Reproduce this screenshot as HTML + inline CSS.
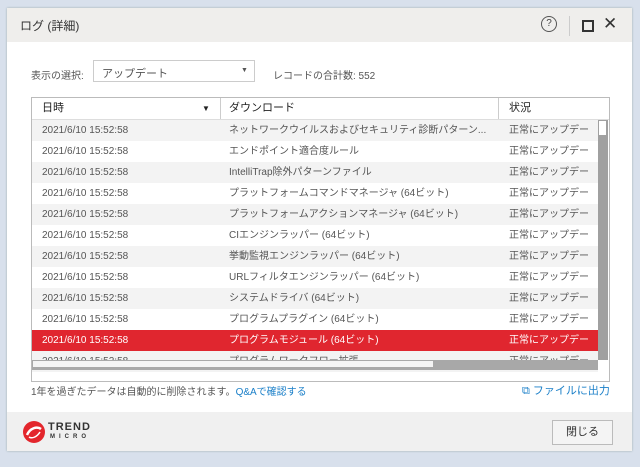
<!DOCTYPE html>
<html><head><meta charset="utf-8"><style>
body{margin:0;width:640px;height:467px;background:#d8e0ec;font-family:"Liberation Sans","Noto Sans CJK JP",sans-serif;position:relative;overflow:hidden;font-size:10px;color:#333}
.win{position:absolute;left:7px;top:8px;width:625px;height:443px;background:#fff;box-shadow:0 0 2px #9aa;}
.title{position:absolute;left:0;top:0;width:625px;height:34px;background:#efeeec;}
.abs{position:absolute;white-space:nowrap}
.tbl{position:absolute;left:24px;top:89px;width:577px;height:283px;border:1px solid #bbb;background:#fff;overflow:hidden}
.row{position:absolute;left:0;width:566px;height:21px;line-height:21px;color:#555;overflow:hidden;font-size:10px}
.row span{position:absolute}
.footer{position:absolute;left:0;top:404px;width:625px;height:39px;background:#f0f0f0}
</style></head><body>
<div class="win">
<div class="title">
<div class="abs" style="left:13px;top:9px;font-size:12px;color:#333">ログ (詳細)</div>
<div class="abs" style="left:534px;top:8px;width:14px;height:14px;border:1px solid #555;border-radius:50%;font-size:10px;text-align:center;line-height:14px;color:#444">?</div>
<div class="abs" style="left:562px;top:8px;width:1px;height:20px;background:#ccc"></div>
<div class="abs" style="left:575px;top:12px;width:8px;height:8px;border:2px solid #333"></div>
<div class="abs" style="left:596px;top:6px;font-size:17px;color:#333">✕</div>
</div>
<div class="abs" style="left:24px;top:59px;font-size:10px;color:#555">表示の選択:</div>
<div class="abs" style="left:86px;top:52px;width:162px;height:22px;border:1px solid #ccc;box-sizing:border-box"><span class="abs" style="left:8px;top:4px;font-size:11px;color:#555">アップデート</span><span class="abs" style="left:147px;top:6px;font-size:7px;color:#555">▼</span></div>
<div class="abs" style="left:266px;top:59px;color:#555">レコードの合計数: 552</div>
<div class="tbl">
<div class="abs" style="left:0;top:0;width:577px;height:21px;border-bottom:1px solid #ddd;font-size:11px;color:#222;line-height:21px">
<span class="abs" style="left:10px">日時</span><span class="abs" style="left:170px;font-size:8px">▼</span>
<span class="abs" style="left:188px;top:0;width:1px;height:21px;background:#ccc"></span>
<span class="abs" style="left:197px">ダウンロード</span>
<span class="abs" style="left:466px;top:0;width:1px;height:21px;background:#ccc"></span>
<span class="abs" style="left:477px">状況</span></div>
<div class="row" style="top:22px;background:#f3f3f3"><span style="left:10px">2021/6/10 15:52:58</span><span style="left:197px">ネットワークウイルスおよびセキュリティ診断パターン...</span><span style="left:477px">正常にアップデート</span></div>
<div class="row" style="top:43px"><span style="left:10px">2021/6/10 15:52:58</span><span style="left:197px">エンドポイント適合度ルール</span><span style="left:477px">正常にアップデート</span></div>
<div class="row" style="top:64px;background:#f3f3f3"><span style="left:10px">2021/6/10 15:52:58</span><span style="left:197px">IntelliTrap除外パターンファイル</span><span style="left:477px">正常にアップデート</span></div>
<div class="row" style="top:85px"><span style="left:10px">2021/6/10 15:52:58</span><span style="left:197px">プラットフォームコマンドマネージャ (64ビット)</span><span style="left:477px">正常にアップデート</span></div>
<div class="row" style="top:106px;background:#f3f3f3"><span style="left:10px">2021/6/10 15:52:58</span><span style="left:197px">プラットフォームアクションマネージャ (64ビット)</span><span style="left:477px">正常にアップデート</span></div>
<div class="row" style="top:127px"><span style="left:10px">2021/6/10 15:52:58</span><span style="left:197px">CIエンジンラッパー (64ビット)</span><span style="left:477px">正常にアップデート</span></div>
<div class="row" style="top:148px;background:#f3f3f3"><span style="left:10px">2021/6/10 15:52:58</span><span style="left:197px">挙動監視エンジンラッパー (64ビット)</span><span style="left:477px">正常にアップデート</span></div>
<div class="row" style="top:169px"><span style="left:10px">2021/6/10 15:52:58</span><span style="left:197px">URLフィルタエンジンラッパー (64ビット)</span><span style="left:477px">正常にアップデート</span></div>
<div class="row" style="top:190px;background:#f3f3f3"><span style="left:10px">2021/6/10 15:52:58</span><span style="left:197px">システムドライバ (64ビット)</span><span style="left:477px">正常にアップデート</span></div>
<div class="row" style="top:211px"><span style="left:10px">2021/6/10 15:52:58</span><span style="left:197px">プログラムプラグイン (64ビット)</span><span style="left:477px">正常にアップデート</span></div>
<div class="row" style="top:232px;background:#e0262f;color:#fff"><span style="left:10px">2021/6/10 15:52:58</span><span style="left:197px">プログラムモジュール (64ビット)</span><span style="left:477px">正常にアップデート</span></div>
<div class="row" style="top:253px;background:#f3f3f3"><span style="left:10px">2021/6/10 15:52:58</span><span style="left:197px">プログラムワークフロー拡張</span><span style="left:477px">正常にアップデート</span></div>
<div class="abs" style="left:566px;top:22px;width:10px;height:240px;background:#a0a0a0"></div>
<div class="abs" style="left:567px;top:23px;width:7px;height:14px;background:#fff"></div>
<div class="abs" style="left:0;top:262px;width:566px;height:10px;background:#a8a8a8"></div>
<div class="abs" style="left:1px;top:263px;width:400px;height:6px;background:#f4f4f4"></div>
<div class="abs" style="left:566px;top:262px;width:11px;height:21px;background:#fff"></div>
</div>
<div class="abs" style="left:24px;top:375px;color:#555">1年を過ぎたデータは自動的に削除されます。<span style="color:#1a7fc8">Q&amp;Aで確認する</span></div>
<div class="abs" style="left:515px;top:374px;color:#1a7fc8;font-size:11px">⧉ ファイルに出力</div>
<div class="footer">
<svg class="abs" style="left:15px;top:8px" width="24" height="24" viewBox="0 0 24 24"><circle cx="12" cy="12" r="11" fill="#e3262c"/><path d="M5 15 C8 8,15 6,19 9" stroke="#fff" stroke-width="2.5" fill="none"/><path d="M7 17 C10 19,15 17,18 12" stroke="#fff" stroke-width="1.5" fill="none"/></svg>
<div class="abs" style="left:41px;top:9px;font-size:11px;font-weight:bold;color:#333;letter-spacing:1px">TREND</div>
<div class="abs" style="left:43px;top:22px;font-size:6px;font-weight:bold;color:#333;letter-spacing:4px">MICRO</div>
<div class="abs" style="left:545px;top:8px;width:61px;height:25px;border:1px solid #bbb;background:#f4f4f4;box-sizing:border-box;text-align:center;line-height:23px;font-size:11px;color:#333">閉じる</div>
</div>
</div>
</body></html>
